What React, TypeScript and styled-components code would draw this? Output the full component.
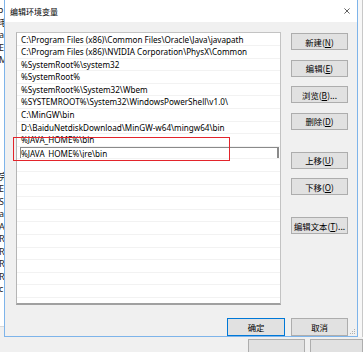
import styled, { createGlobalStyle } from "styled-components";

const GlobalStyle = createGlobalStyle`
  html, body {
    margin: 0;
    padding: 0;
    background: #ffffff;
  }
  body {
    font-family: "Noto Sans", "Noto Sans CJK SC", sans-serif;
  }
`;

const pathList = [
  "C:\\Program Files (x86)\\Common Files\\Oracle\\Java\\javapath",
  "C:\\Program Files (x86)\\NVIDIA Corporation\\PhysX\\Common",
  "%SystemRoot%\\system32",
  "%SystemRoot%",
  "%SystemRoot%\\System32\\Wbem",
  "%SYSTEMROOT%\\System32\\WindowsPowerShell\\v1.0\\",
  "C:\\MinGW\\bin",
  "D:\\BaiduNetdiskDownload\\MinGW-w64\\mingw64\\bin",
  "%JAVA_HOME%\\bin",
  "%JAVA_HOME%\\jre\\bin",
];

const EDIT_INDEX = 9;
const TOTAL_ROWS = 22;

const buttonGroups = [
  [
    { label: "新建", key: "N" },
    { label: "编辑", key: "E" },
    { label: "浏览", key: "B", suffix: "..." },
    { label: "删除", key: "D" },
  ],
  [
    { label: "上移", key: "U" },
    { label: "下移", key: "O" },
  ],
  [{ label: "编辑文本", key: "T", suffix: "..." }],
];

const leftGlyphsTop = ["ↄ", "毛", "a", "E", "M"];
const leftGlyphsBottom = ["完", "E", "S", "a", "A", "R", "R", "R", "R", "c"];

function App() {
  const rows = Array.from({ length: TOTAL_ROWS }, (_, i) => pathList[i] ?? "");

  return (
    <>
      <GlobalStyle />
      <Screen>
        <TopArea>
          <BackStrip>
            <GlyphBlock $top={4}>
              {leftGlyphsTop.map((g, i) => (
                <Glyph key={i}>{g}</Glyph>
              ))}
            </GlyphBlock>
            <GlyphBlock $top={104}>
              {leftGlyphsBottom.map((g, i) => (
                <Glyph key={i}>{g}</Glyph>
              ))}
            </GlyphBlock>
            <StripFloor />
          </BackStrip>

          <Dialog>
            <TitleBar>
              <Title>编辑环境变量</Title>
              <CloseIcon viewBox="0 0 7 7" aria-hidden>
                <path d="M0.5 0.5 L6.5 6.5 M6.5 0.5 L0.5 6.5" />
              </CloseIcon>
            </TitleBar>

            <Body>
              <Main>
                <ListWrap>
                  <List>
                    {rows.map((text, i) => (
                      <Row key={i}>
                        {i === EDIT_INDEX ? <EditBox>{text}</EditBox> : text}
                      </Row>
                    ))}
                  </List>
                  <Highlight />
                </ListWrap>

                <ButtonColumn>
                  {buttonGroups.map((group, gi) => (
                    <ButtonGroup key={gi}>
                      {group.map((b) => (
                        <Button key={b.label}>
                          {b.label}(<u>{b.key}</u>){b.suffix}
                        </Button>
                      ))}
                    </ButtonGroup>
                  ))}
                </ButtonColumn>
              </Main>

              <Footer>
                <Button $primary $width={58} $height={18}>
                  确定
                </Button>
                <Button $height={18}>取消</Button>
              </Footer>

              <Grip viewBox="0 0 7 7" aria-hidden>
                <rect x="5" y="1" width="1" height="1" />
                <rect x="3" y="3" width="1" height="1" />
                <rect x="5" y="3" width="1" height="1" />
                <rect x="1" y="5" width="1" height="1" />
                <rect x="3" y="5" width="1" height="1" />
                <rect x="5" y="5" width="1" height="1" />
              </Grip>
            </Body>
          </Dialog>

          <RightStrip />
        </TopArea>

        <BottomStrip>
          <GhostButton $width={57} />
          <GhostButton $width={53} />
        </BottomStrip>
      </Screen>
    </>
  );
}

const Screen = styled.div`
  width: 363px;
  height: 352px;
  overflow: hidden;
  display: flex;
  flex-direction: column;
  background: #f0f0f0;
`;

const TopArea = styled.div`
  display: flex;
  height: 348px;
`;

const BackStrip = styled.div`
  width: 4px;
  flex-shrink: 0;
  background: #ffffff;
  overflow: hidden;
  display: flex;
  flex-direction: column;
  font-family: "Noto Sans", "Noto Sans CJK SC", sans-serif;
  font-size: 9px;
  color: #222;
`;

const GlyphBlock = styled.div<{ $top: number }>`
  margin-top: ${({ $top }) => $top}px;
  display: flex;
  flex-direction: column;
`;

const Glyph = styled.span`
  display: block;
  height: 12.5px;
  line-height: 12.5px;
  margin-left: -1px;
  white-space: nowrap;
`;

const StripFloor = styled.div`
  margin-top: auto;
  height: 10px;
  background: #f0f0f0;
  border-top: 1px solid #d9d9d9;
`;

const Dialog = styled.div`
  width: 354px;
  flex-shrink: 0;
  box-sizing: border-box;
  border: 1px solid #7eb4ea;
  border-top: 0;
  background: #f0f0f0;
  display: flex;
  flex-direction: column;
`;

const TitleBar = styled.div`
  height: 22px;
  flex-shrink: 0;
  background: #ffffff;
  display: flex;
  align-items: center;
  justify-content: space-between;
  padding: 0 7px 0 5px;
`;

const Title = styled.span`
  font-family: "Noto Sans CJK SC", sans-serif;
  font-size: 8px;
  color: #000;
`;

const CloseIcon = styled.svg`
  width: 6px;
  height: 6px;
  stroke: #333;
  stroke-width: 0.9;
  fill: none;
`;

const Body = styled.div`
  position: relative;
  flex: 1;
  display: flex;
  flex-direction: column;
  padding: 10px 9px 0 11px;
`;

const Main = styled.div`
  display: flex;
  gap: 10px;
`;

const ListWrap = styled.div`
  position: relative;
  width: 265px;
  height: 273px;
`;

const List = styled.div`
  box-sizing: border-box;
  width: 100%;
  height: 100%;
  overflow: hidden;
  background: #ffffff;
  border: 1px solid #c3c3c3;
  border-bottom: 2px solid #a0a0a0;
  border-left-color: #b5b5b5;
  padding-top: 0.5px;
`;

const Row = styled.div`
  box-sizing: border-box;
  height: 12.6px;
  line-height: 12.6px;
  padding-left: 4px;
  padding-right: 1px;
  border-bottom: 1px solid #f2f2f2;
  font-size: 8.15px;
  color: #000;
  white-space: nowrap;
  overflow-x: hidden;
`;

const EditBox = styled.div`
  box-sizing: border-box;
  height: 13px;
  margin-left: -1px;
  line-height: 11.5px;
  border: 1px solid #8a8a8a;
  border-right-width: 2px;
  background: #fff;
`;

const Highlight = styled.div`
  position: absolute;
  left: -3px;
  top: 105px;
  width: 217px;
  height: 24px;
  box-sizing: border-box;
  border: 1.5px solid #e3242b;
  pointer-events: none;
`;

const ButtonColumn = styled.div`
  display: flex;
  flex-direction: column;
  gap: 22px;
  padding-top: 1px;
`;

const ButtonGroup = styled.div`
  display: flex;
  flex-direction: column;
  gap: 9.5px;
`;

const Button = styled.div<{ $primary?: boolean; $width?: number; $height?: number }>`
  box-sizing: border-box;
  width: ${({ $width }) => $width ?? 57}px;
  height: ${({ $height }) => $height ?? 17}px;
  display: flex;
  align-items: center;
  justify-content: center;
  background: #e1e1e1;
  border: 1px solid ${({ $primary }) => ($primary ? "#0078d7" : "#adadad")};
  font-family: "Noto Sans CJK SC", sans-serif;
  font-size: 8.4px;
  color: #000;
  white-space: nowrap;

  u {
    text-decoration-thickness: 0.5px;
    text-underline-offset: 1px;
  }
`;

const Footer = styled.div`
  display: flex;
  justify-content: flex-end;
  gap: 6px;
  margin-top: 13px;
`;

const Grip = styled.svg`
  position: absolute;
  right: 1px;
  bottom: 1px;
  width: 7px;
  height: 7px;
  fill: #b0b0b0;
`;

const RightStrip = styled.div`
  flex: 1;
  background: #f7f7f7;
  border-right: 1px solid #c8c8c8;
`;

const BottomStrip = styled.div`
  flex: 1;
  display: flex;
  gap: 5px;
  padding-left: 248px;
  padding-top: 2px;
  background: #f0f0f0;
`;

const GhostButton = styled.div<{ $width: number }>`
  box-sizing: border-box;
  width: ${({ $width }) => $width}px;
  height: 20px;
  background: #e1e1e1;
  border: 1px solid #adadad;
`;

export default App;
